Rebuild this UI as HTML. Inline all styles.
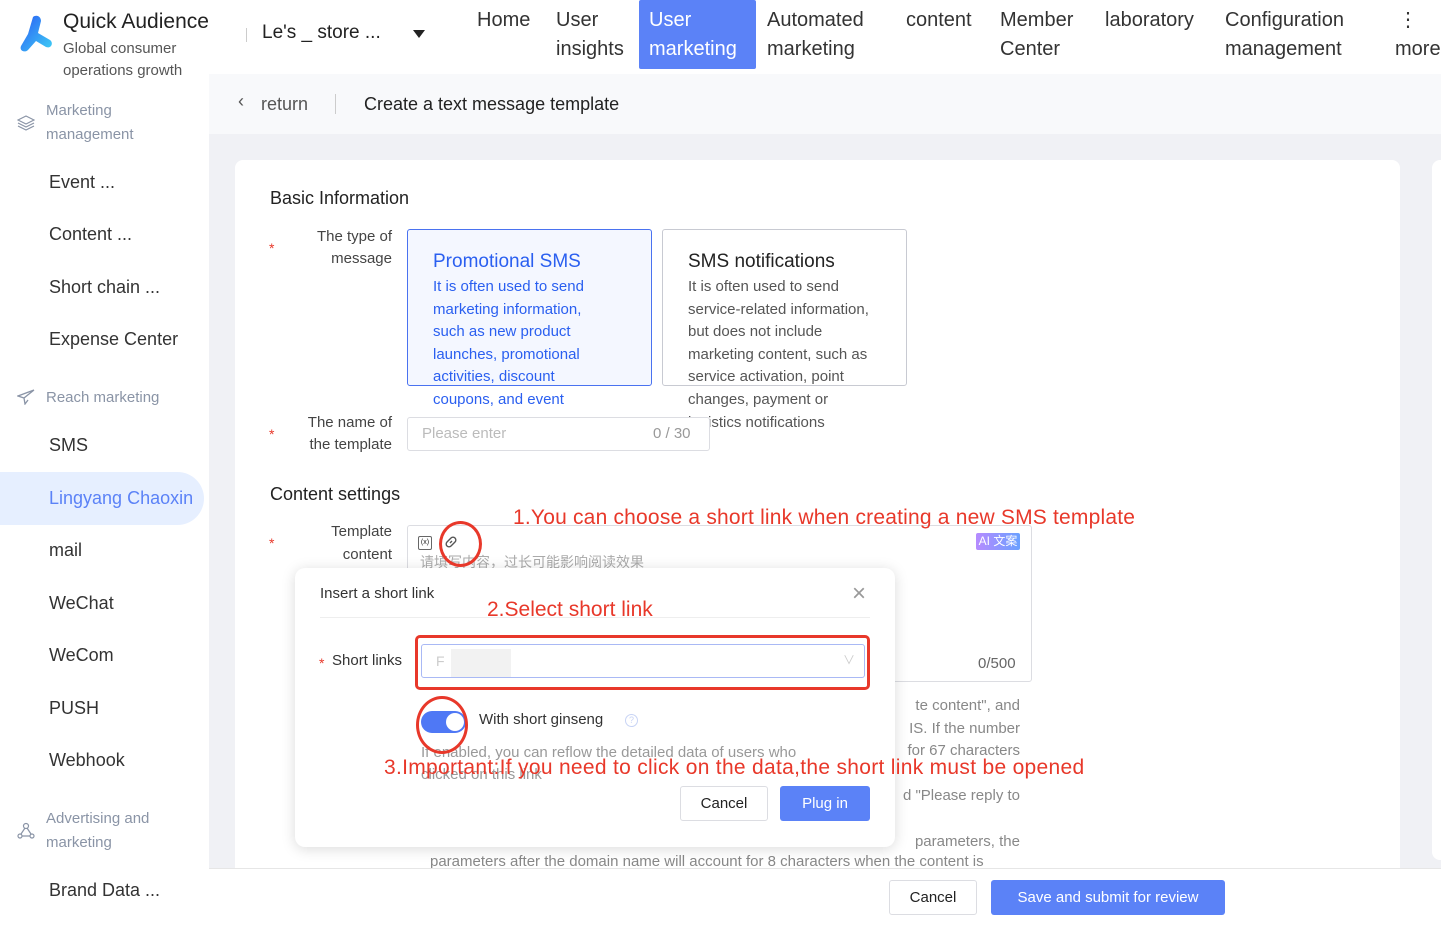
<!DOCTYPE html>
<html><head><meta charset="utf-8"><style>
*{box-sizing:border-box;margin:0;padding:0}
body{width:1441px;height:928px;overflow:hidden;font-family:"Liberation Sans","Noto Sans CJK SC",sans-serif;background:#f0f1f5;position:relative;color:#222}
.a{position:absolute}
.nav{font-size:20px;color:#333;line-height:29px}
.side{font-size:18px;color:#333}
.grp{font-size:15px;color:#8a94a6;line-height:24px}
.red{color:#e8382a}
</style></head><body>
<!-- header -->
<div class="a" style="left:0;top:0;width:1441px;height:74px;background:#fff"></div>
<div class="a nav" style="left:477px;top:6px">Home</div>
<div class="a nav" style="left:556px;top:6px">User<br>insights</div>
<div class="a" style="left:639px;top:0;width:117px;height:69px;background:#5b82f7;border-radius:2px"></div>
<div class="a nav" style="left:649px;top:6px;color:#fff">User<br>marketing</div>
<div class="a nav" style="left:767px;top:6px">Automated<br>marketing</div>
<div class="a nav" style="left:906px;top:6px">content</div>
<div class="a nav" style="left:1000px;top:6px">Member<br>Center</div>
<div class="a nav" style="left:1105px;top:6px">laboratory</div>
<div class="a nav" style="left:1225px;top:6px">Configuration<br>management</div>
<div class="a nav" style="left:1398px;top:6px">⋮</div>
<div class="a nav" style="left:1395px;top:35px">more</div>
<!-- sidebar -->
<div class="a" style="left:0;top:74px;width:209px;height:854px;background:#fff"></div>
<svg class="a" style="left:17px;top:14px" width="38" height="38" viewBox="0 0 38 38"><defs><linearGradient id="g" x1="0" y1="0" x2="1" y2="1"><stop offset="0" stop-color="#2a5cf5"/><stop offset="1" stop-color="#3fd0f5"/></linearGradient></defs><path d="M16 3c4-3 8 0 8 4l-3 12 12 7c4 3 1 9-4 7l-10-6-8 9c-3 3-9 1-7-4l7-12z" fill="url(#g)"/></svg>
<div class="a" style="left:63px;top:10px;font-size:21px;color:#222">Quick Audience</div>
<div class="a" style="left:63px;top:38px;font-size:15px;color:#555;line-height:22px">Global consumer<br>operations growth</div>
<div class="a" style="left:246px;top:28px;width:1px;height:14px;background:#ccc"></div>
<div class="a" style="left:262px;top:22px;font-size:19px;color:#222">Le's _ store ...</div>
<div class="a" style="left:413px;top:30px;border-left:6px solid transparent;border-right:6px solid transparent;border-top:8px solid #222"></div>
<svg class="a" style="left:17px;top:114px" width="18" height="18" viewBox="0 0 18 18" fill="none" stroke="#8a94a6" stroke-width="1.2"><path d="M9 2 1 6l8 4 8-4z M1 9l8 4 8-4 M1 12l8 4 8-4"/></svg>
<div class="a grp" style="left:46px;top:99px">Marketing<br>management</div>
<div class="a side" style="left:49px;top:172px">Event ...</div>
<div class="a side" style="left:49px;top:224px">Content ...</div>
<div class="a side" style="left:49px;top:277px">Short chain ...</div>
<div class="a side" style="left:49px;top:329px">Expense Center</div>
<svg class="a" style="left:17px;top:389px" width="18" height="16" viewBox="0 0 18 16" fill="none" stroke="#8a94a6" stroke-width="1.3"><path d="M17 1 1 7l6 2 1 6 3-4 M7 9l10-8"/></svg>
<div class="a grp" style="left:46px;top:386px">Reach marketing</div>
<div class="a side" style="left:49px;top:435px">SMS</div>
<div class="a" style="left:0;top:472px;width:204px;height:53px;background:#e6efff;border-radius:0 27px 27px 0"></div>
<div class="a side" style="left:49px;top:488px;color:#5b82f7">Lingyang Chaoxin</div>
<div class="a side" style="left:49px;top:540px">mail</div>
<div class="a side" style="left:49px;top:593px">WeChat</div>
<div class="a side" style="left:49px;top:645px">WeCom</div>
<div class="a side" style="left:49px;top:698px">PUSH</div>
<div class="a side" style="left:49px;top:750px">Webhook</div>
<svg class="a" style="left:17px;top:822px" width="18" height="18" viewBox="0 0 18 18" fill="none" stroke="#8a94a6" stroke-width="1.2"><circle cx="9" cy="4" r="2.5"/><circle cx="3" cy="14" r="2"/><circle cx="15" cy="14" r="2"/><path d="M8 6 4 12 M10 6l4 6 M5 14h8"/></svg>
<div class="a grp" style="left:46px;top:807px">Advertising and<br>marketing</div>
<div class="a side" style="left:49px;top:880px">Brand Data ...</div>
<!-- page header -->
<div class="a" style="left:209px;top:74px;width:1232px;height:60px;background:#f8f9fb"></div>
<div class="a" style="left:238px;top:91px;font-size:18px;color:#555">‹</div>
<div class="a" style="left:261px;top:94px;font-size:18px;color:#555">return</div>
<div class="a" style="left:335px;top:94px;width:1px;height:20px;background:#ccc"></div>
<div class="a" style="left:364px;top:94px;font-size:18px;color:#222">Create a text message template</div>
<!-- card -->
<div class="a" style="left:235px;top:160px;width:1165px;height:720px;background:#fff;border-radius:8px"></div>
<div class="a" style="left:1432px;top:160px;width:20px;height:700px;background:#fff;border-radius:8px"></div>
<div class="a" style="left:270px;top:188px;font-size:18px;color:#222">Basic Information</div>
<div class="a red" style="left:269px;top:240px;font-size:14px">*</div>
<div class="a" style="left:300px;top:226px;width:92px;text-align:right;font-size:15px;color:#444;line-height:22px">The type of message</div>
<div class="a" style="left:407px;top:229px;width:245px;height:157px;border:1px solid #4a72f0;border-radius:3px;background:#f4f7ff"></div>
<div class="a" style="left:662px;top:229px;width:245px;height:157px;border:1px solid #c8cad2;border-radius:3px"></div>
<div class="a" style="left:433px;top:251px;font-size:19px;color:#2a5ff0">Promotional SMS</div>
<div class="a" style="left:433px;top:276px;font-size:15px;color:#2a5ff0;line-height:22.6px;width:178px">It is often used to send marketing information, such as new product launches, promotional activities, discount coupons, and event</div>
<div class="a" style="left:688px;top:251px;font-size:19px;color:#222">SMS notifications</div>
<div class="a" style="left:688px;top:276px;font-size:15px;color:#555;line-height:22.6px;width:194px">It is often used to send service-related information, but does not include marketing content, such as service activation, point changes, payment or logistics notifications</div>
<div class="a red" style="left:269px;top:426px;font-size:14px">*</div>
<div class="a" style="left:296px;top:412px;width:96px;text-align:right;font-size:15px;color:#444;line-height:22px">The name of the template</div>
<div class="a" style="left:407px;top:417px;width:303px;height:34px;border:1px solid #dcdde2;border-radius:3px;background:#fff"></div>
<div class="a" style="left:422px;top:425px;font-size:15px;color:#bbb">Please enter</div>
<div class="a" style="left:653px;top:425px;font-size:15px;color:#999">0 / 30</div>
<div class="a" style="left:270px;top:484px;font-size:18px;color:#222">Content settings</div>
<div class="a red" style="left:269px;top:535px;font-size:14px">*</div>
<div class="a" style="left:310px;top:520px;width:82px;text-align:right;font-size:15px;color:#444;line-height:23px">Template content</div>
<div class="a" style="left:407px;top:525px;width:625px;height:157px;border:1px solid #dcdde2;border-radius:3px"></div>
<div class="a" style="left:418px;top:536px;width:14px;height:14px;border:1px solid #666;border-radius:2px;font-size:7px;text-align:center;line-height:12px">(x)</div>
<svg class="a" style="left:443px;top:534px" width="16" height="16" viewBox="0 0 16 16" fill="none" stroke="#555" stroke-width="1.4"><path d="M7 9 9 7 M6 6 4 8a2.5 2.5 0 0 0 4 4l2-2 M10 10l2-2a2.5 2.5 0 0 0-4-4L6 6"/></svg>
<div class="a" style="left:420px;top:552px;font-size:14px;color:#aaa">请填写内容，过长可能影响阅读效果</div>
<div class="a" style="left:976px;top:533px;width:44px;height:17px;background:linear-gradient(90deg,#b68bff,#6aa0ff);color:#fff;font-size:12px;text-align:center;line-height:17px;border-radius:2px">AI 文案</div>
<div class="a" style="left:978px;top:655px;font-size:15px;color:#666">0/500</div>
<div class="a" style="left:420px;top:695px;font-size:15px;color:#888;line-height:22.6px;width:600px;text-align:right">te content", and<br>IS. If the number<br>for 67 characters<br><br>d "Please reply to<br><br>parameters, the</div>
<div class="a" style="left:430px;top:853px;font-size:15px;color:#888">parameters after the domain name will account for 8 characters when the content is</div>
<!-- footer -->
<div class="a" style="left:209px;top:868px;width:1232px;height:60px;background:#fff;border-top:1px solid #e6e6e6"></div>
<div class="a" style="left:889px;top:880px;width:88px;height:35px;border:1px solid #dcdde2;border-radius:3px;text-align:center;line-height:33px;font-size:15px">Cancel</div>
<div class="a" style="left:991px;top:880px;width:234px;height:35px;background:#5b82f7;border-radius:3px;text-align:center;line-height:35px;font-size:15px;color:#fff">Save and submit for review</div>
<!-- modal -->
<div class="a" style="left:295px;top:568px;width:600px;height:279px;background:#fff;border-radius:10px;box-shadow:0 2px 14px rgba(0,0,0,.15)"></div>
<div class="a" style="left:320px;top:585px;font-size:15px;color:#333">Insert a short link</div>
<div class="a" style="left:852px;top:580px;font-size:24px;color:#999;font-weight:300">×</div>
<div class="a" style="left:320px;top:617px;width:550px;height:1px;background:#eee"></div>
<div class="a red" style="left:319px;top:655px;font-size:14px">*</div>
<div class="a" style="left:332px;top:652px;font-size:15px;color:#333">Short links</div>
<div class="a" style="left:421px;top:644px;width:444px;height:34px;border:1px solid #a9b9f5;border-radius:3px"></div>
<div class="a" style="left:436px;top:653px;font-size:14px;color:#ccc">F</div>
<div class="a" style="left:451px;top:649px;width:60px;height:28px;background:#f2f2f2"></div>
<div class="a" style="left:843px;top:651px;font-size:12px;color:#ccc">∨</div>
<div class="a" style="left:421px;top:711px;width:45px;height:22px;background:#4f78f5;border-radius:11px"></div>
<div class="a" style="left:446px;top:713px;width:18px;height:18px;background:#fff;border-radius:50%"></div>
<div class="a" style="left:479px;top:711px;font-size:15px;color:#333">With short ginseng</div>
<div class="a" style="left:625px;top:714px;width:13px;height:13px;border:1px solid #c8d4f5;border-radius:50%;font-size:9px;color:#c8d4f5;text-align:center;line-height:11px">?</div>
<div class="a" style="left:421px;top:742px;font-size:15px;color:#999;line-height:22px">If enabled, you can reflow the detailed data of users who<br>clicked on this link</div>
<div class="a" style="left:680px;top:786px;width:88px;height:35px;border:1px solid #dcdde2;border-radius:3px;text-align:center;line-height:33px;font-size:15px">Cancel</div>
<div class="a" style="left:780px;top:786px;width:90px;height:35px;background:#5b82f7;border-radius:3px;text-align:center;line-height:35px;font-size:15px;color:#fff">Plug in</div>
<!-- annotations -->
<div class="a red" style="left:513px;top:506px;font-size:21px;letter-spacing:0.2px">1.You can choose a short link when creating a new SMS template</div>
<div class="a" style="left:439px;top:521px;width:43px;height:46px;border:3px solid #e8382a;border-radius:50%"></div>
<div class="a red" style="left:487px;top:598px;font-size:21px">2.Select short link</div>
<div class="a" style="left:415px;top:635px;width:455px;height:55px;border:3px solid #e8382a;border-radius:5px"></div>
<div class="a" style="left:416px;top:696px;width:52px;height:58px;border:3px solid #e8382a;border-radius:50%"></div>
<div class="a red" style="left:384px;top:756px;font-size:21px;letter-spacing:0.3px">3.Important:If you need to click on the data,the short link must be opened</div>
</body></html>
